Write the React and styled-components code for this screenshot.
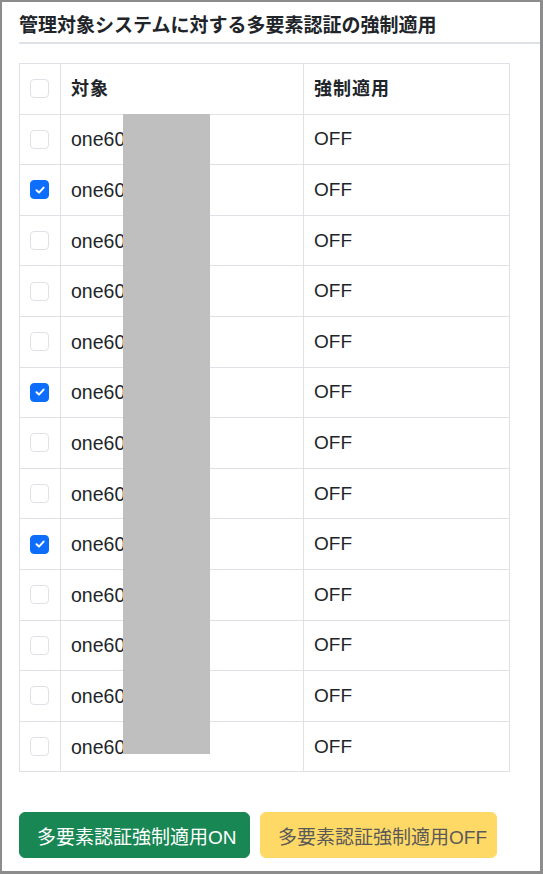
import styled, { createGlobalStyle } from "styled-components";

const GlobalStyle = createGlobalStyle`
  html, body {
    margin: 0;
    padding: 0;
    background: #fff;
  }
  body {
    font-family: "Liberation Sans", "Noto Sans CJK JP", sans-serif;
    color: #212529;
  }
`;

const rows = [
  { name: "one60", checked: false },
  { name: "one60", checked: true },
  { name: "one60", checked: false },
  { name: "one60", checked: false },
  { name: "one60", checked: false },
  { name: "one60", checked: true },
  { name: "one60", checked: false },
  { name: "one60", checked: false },
  { name: "one60", checked: true },
  { name: "one60", checked: false },
  { name: "one60", checked: false },
  { name: "one60", checked: false },
  { name: "one60", checked: false },
];

function CheckBox({ checked }) {
  return (
    <Box $checked={checked}>
      {checked && (
        <svg width="12" height="12" viewBox="0 0 12 12">
          <path
            d="M2.5 6.3 L5 8.6 L9.6 3.6"
            fill="none"
            stroke="#fff"
            strokeWidth="2"
            strokeLinecap="round"
            strokeLinejoin="round"
          />
        </svg>
      )}
    </Box>
  );
}

export default function App() {
  return (
    <Frame>
      <GlobalStyle />
      <Title>管理対象システムに対する多要素認証の強制適用</Title>
      <TableWrap>
        <Table>
          <colgroup>
            <col style={{ width: 41 }} />
            <col style={{ width: 243 }} />
            <col style={{ width: 206 }} />
          </colgroup>
          <thead>
            <Row>
              <CheckCell>
                <CheckBox checked={false} />
              </CheckCell>
              <HeadCell>対象</HeadCell>
              <HeadCell>強制適用</HeadCell>
            </Row>
          </thead>
          <tbody>
            {rows.map((r, i) => (
              <Row key={i}>
                <CheckCell>
                  <CheckBox checked={r.checked} />
                </CheckCell>
                <NameCell>{r.name}</NameCell>
                <Cell>OFF</Cell>
              </Row>
            ))}
          </tbody>
        </Table>
        <Redaction />
      </TableWrap>
      <Buttons>
        <Button $variant="on">多要素認証強制適用ON</Button>
        <Button $variant="off" disabled>
          多要素認証強制適用OFF
        </Button>
      </Buttons>
    </Frame>
  );
}

const Frame = styled.div`
  box-sizing: border-box;
  width: 543px;
  height: 874px;
  border: 2px solid #8c8c8c;
  border-right-width: 3px;
  border-bottom-width: 3px;
  padding: 0 0 0 17px;
  overflow: hidden;
`;

const Title = styled.h2`
  margin: 0;
  padding: 12px 0 4px 0;
  font-size: 19px;
  font-weight: 700;
  line-height: 24px;
  letter-spacing: 0;
  white-space: nowrap;
  color: #212529;
  border-bottom: 2px solid #dee2e6;
`;

const TableWrap = styled.div`
  position: relative;
  width: 490px;
  margin-top: 19px;
`;

const Table = styled.table`
  width: 490px;
  border-collapse: collapse;
  table-layout: fixed;
  border: 1px solid #dee2e6;
`;

const Row = styled.tr`
  height: 50.6px;
`;

const Cell = styled.td`
  border: 1px solid #dee2e6;
  padding: 0 10px;
  font-size: 19px;
  line-height: 24px;
  color: #212529;
  vertical-align: middle;
  white-space: nowrap;
`;

const NameCell = styled(Cell)`
  font-size: 19.5px;
`;

const HeadCell = styled(Cell).attrs({ as: "th" })`
  text-align: left;
  font-weight: 700;
  font-size: 18px;
  letter-spacing: 1px;
`;

const CheckCell = styled(Cell)`
  padding: 0 0 0 10px;
`;

const Box = styled.span`
  box-sizing: border-box;
  display: flex;
  align-items: center;
  justify-content: center;
  width: 19px;
  height: 19px;
  border-radius: 4px;
  border: 1px solid ${(p) => (p.$checked ? "#0d6efd" : "#dee2e6")};
  background: ${(p) => (p.$checked ? "#0d6efd" : "#fff")};
`;

const Redaction = styled.div`
  position: absolute;
  left: 104px;
  top: 51px;
  width: 87px;
  height: 640px;
  background: #bfbfbf;
`;

const Buttons = styled.div`
  display: flex;
  gap: 10px;
  margin-top: 40px;
`;

const Button = styled.button`
  box-sizing: border-box;
  height: 46px;
  padding: 0 17px;
  border-radius: 6px;
  font-family: "Liberation Sans", "Noto Sans CJK JP", sans-serif;
  font-size: 19px;
  letter-spacing: 0;
  border: 1px solid ${(p) => (p.$variant === "on" ? "#198754" : "#ffd966")};
  background: ${(p) => (p.$variant === "on" ? "#198754" : "#ffd966")};
  color: ${(p) => (p.$variant === "on" ? "#ffffff" : "#595959")};
  width: ${(p) => (p.$variant === "on" ? "231px" : "237px")};
  white-space: nowrap;
`;
